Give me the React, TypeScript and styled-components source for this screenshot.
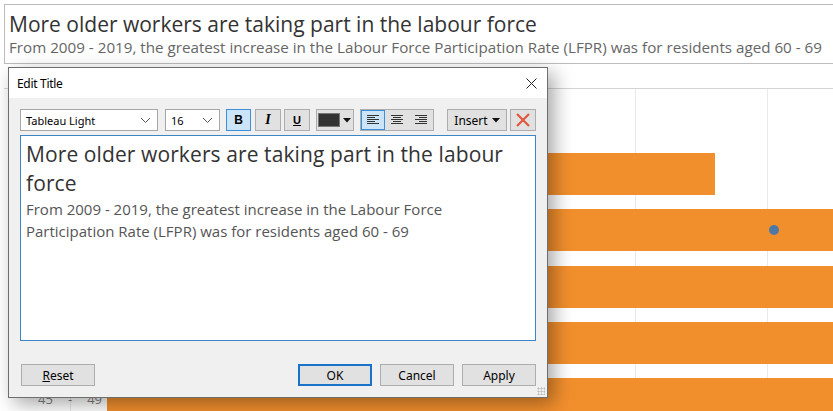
import styled, { createGlobalStyle } from "styled-components";

const GlobalStyle = createGlobalStyle`
  html, body {
    margin: 0;
    padding: 0;
    background: #ffffff;
  }
  body {
    font-family: "Open Sans", "Noto Sans", sans-serif;
    overflow: hidden;
  }
`;

type RowType = {
  label: string;
  value: number;
  dot?: number;
};

const rows: RowType[] = [
  { label: "70 - 74", value: 120 },
  { label: "65 - 69", value: 608 },
  { label: "60 - 64", value: 760, dot: 667 },
  { label: "55 - 59", value: 760 },
  { label: "50 - 54", value: 760 },
  { label: "45 - 49", value: 760 },
];

const Page = styled.div`
  position: relative;
  width: 833px;
  height: 411px;
  overflow: hidden;
  background: #fff;
`;

const Header = styled.div`
  margin: 4px 0 0 4px;
  height: 60px;
  border: 1px solid #bdbdbd;
  border-right: none;
  padding: 5px 0 0 4px;
  box-sizing: border-box;
`;

const HeaderTitle = styled.div`
  font-family: "Open Sans", sans-serif;
  font-size: 21px;
  line-height: 28px;
  color: #333;
`;

const HeaderSub = styled.div`
  font-family: "Open Sans", sans-serif;
  font-size: 15.2px;
  line-height: 18px;
  color: #666;
`;

const Chart = styled.div`
  margin: 24px 0 0 4px;
  border-top: 1px solid #d4d4d4;
  padding-top: 8px;
  display: flex;
  flex-direction: column;
  gap: 14.2px;
  background-image: repeating-linear-gradient(
    to right,
    #e9e9e9 0,
    #e9e9e9 1px,
    transparent 1px,
    transparent 132px
  );
  background-position: 103px 0;
  background-repeat: repeat-x;
  height: 400px;
`;

const Row = styled.div`
  display: flex;
  align-items: center;
  height: 42px;
`;

const Label = styled.div`
  width: 103px;
  flex-shrink: 0;
  display: flex;
  justify-content: space-between;
  padding: 0 5px 0 34px;
  box-sizing: border-box;
  font-family: "Open Sans", sans-serif;
  font-size: 13px;
  color: #808080;
`;

const BarTrack = styled.div`
  position: relative;
  flex: 1;
  height: 100%;
`;

const Bar = styled.div`
  height: 100%;
  background: #f28f2d;
`;

const Dot = styled.div`
  position: absolute;
  top: 50%;
  width: 10px;
  height: 10px;
  margin: -5px 0 0 -5px;
  border-radius: 50%;
  background: #4e79a7;
`;

const Dialog = styled.div`
  position: absolute;
  left: 8px;
  top: 67px;
  width: 540px;
  height: 331px;
  box-sizing: border-box;
  border: 1px solid #6e6e6e;
  background: #f0f0f0;
  box-shadow: 6px 6px 18px rgba(0, 0, 0, 0.35);
  display: flex;
  flex-direction: column;
  font-family: "Noto Sans", "Open Sans", sans-serif;
`;

const TitleBar = styled.div`
  height: 30px;
  background: #fff;
  display: flex;
  align-items: center;
  justify-content: space-between;
  padding: 0 9px 0 8px;
  font-size: 12px;
  color: #000;
  letter-spacing: -0.3px;
`;

const CloseBtn = styled.span`
  display: flex;
  width: 14px;
  height: 14px;
  align-items: center;
  justify-content: center;
`;

const Body = styled.div`
  flex: 1;
  display: flex;
  flex-direction: column;
  padding: 11px;
`;

const Toolbar = styled.div`
  display: flex;
  align-items: center;
  height: 22px;
`;

const Select = styled.div<{ $w: number; $mr: number }>`
  width: ${(p) => p.$w}px;
  height: 22px;
  margin-right: ${(p) => p.$mr}px;
  box-sizing: border-box;
  border: 1px solid #a6a6a6;
  background: #fff;
  display: flex;
  align-items: center;
  justify-content: space-between;
  padding: 0 6px 0 5px;
  font-size: 11px;
  color: #000;
`;

const ToolBtn = styled.div<{ $w: number; $mr: number; $on?: boolean }>`
  width: ${(p) => p.$w}px;
  height: 22px;
  margin-right: ${(p) => p.$mr}px;
  box-sizing: border-box;
  border: 1px solid ${(p) => (p.$on ? "#3c8fd8" : "#adadad")};
  background: ${(p) => (p.$on ? "#cce4f7" : "#e1e1e1")};
  display: flex;
  align-items: center;
  justify-content: center;
  font-size: 12px;
  color: #000;
`;

const Group = styled.div`
  display: flex;
  border: 1px solid #adadad;
  background: #e1e1e1;
  height: 22px;
  box-sizing: border-box;
  margin-right: 13px;
`;

const GroupBtn = styled.div<{ $on?: boolean }>`
  width: 24px;
  height: 20px;
  box-sizing: border-box;
  border: 1px solid ${(p) => (p.$on ? "#3c8fd8" : "transparent")};
  background: ${(p) => (p.$on ? "#cce4f7" : "transparent")};
  display: flex;
  align-items: center;
  justify-content: center;
`;

const Swatch = styled.span`
  width: 22px;
  height: 14px;
  background: #333;
  border: 1px solid #777;
  box-sizing: border-box;
`;

const Editor = styled.div`
  margin-top: 4px;
  height: 206px;
  box-sizing: border-box;
  border: 1px solid #3d86c6;
  background: #fff;
  padding: 4px 5px;
  font-family: "Open Sans", sans-serif;
`;

const EditTitle = styled.div`
  font-size: 21px;
  line-height: 29px;
  letter-spacing: 0.1px;
  color: #333;
`;

const EditSub = styled.div`
  font-size: 15px;
  line-height: 22px;
  color: #555;
`;

const Footer = styled.div`
  margin-top: 23px;
  display: flex;
  align-items: center;
  gap: 8px;
  padding-left: 1px;
`;

const DlgButton = styled.div<{ $primary?: boolean }>`
  width: 74px;
  height: 22px;
  box-sizing: border-box;
  border: ${(p) => (p.$primary ? "2px solid #1a73c8" : "1px solid #adadad")};
  background: #e1e1e1;
  display: flex;
  align-items: center;
  justify-content: center;
  font-size: 12px;
  color: #000;
`;

const Spacer = styled.div`
  flex: 1;
`;

const Grip = styled.div`
  position: absolute;
  right: 2px;
  bottom: 2px;
  width: 8px;
  height: 8px;
  background-image: radial-gradient(#b8b8b8 45%, transparent 50%);
  background-size: 3px 3px;
`;

function Chevron() {
  return (
    <svg width="11" height="7" viewBox="0 0 11 7">
      <path d="M1 1 L5.5 5.5 L10 1" fill="none" stroke="#555" strokeWidth="1" />
    </svg>
  );
}

function AlignIcon({ mode }: { mode: "left" | "center" | "right" }) {
  const lens = [12, 8, 12, 8, 12];
  return (
    <svg width="12" height="10" viewBox="0 0 12 10">
      {lens.map((len, i) => {
        const x1 = mode === "left" ? 0 : mode === "right" ? 12 - len : (12 - len) / 2;
        return (
          <line
            key={i}
            x1={x1}
            x2={x1 + len}
            y1={i * 2 + 0.5}
            y2={i * 2 + 0.5}
            stroke="#333"
            strokeWidth="1"
          />
        );
      })}
    </svg>
  );
}

export default function App() {
  return (
    <Page>
      <GlobalStyle />
      <Header>
        <HeaderTitle>More older workers are taking part in the labour force</HeaderTitle>
        <HeaderSub>
          From 2009 - 2019, the greatest increase in the Labour Force Participation Rate (LFPR) was for
          residents aged 60 - 69
        </HeaderSub>
      </Header>

      <Chart>
        {rows.map((r) => {
          const [a, b] = r.label.split(" - ");
          return (
            <Row key={r.label}>
              <Label>
                <span>{a}</span>
                <span>-</span>
                <span>{b}</span>
              </Label>
              <BarTrack>
                <Bar style={{ width: r.value }} />
                {r.dot !== undefined && <Dot style={{ left: r.dot }} />}
              </BarTrack>
            </Row>
          );
        })}
      </Chart>

      <Dialog>
        <TitleBar>
          <span>Edit Title</span>
          <CloseBtn>
            <svg width="11" height="11" viewBox="0 0 11 11">
              <path d="M0.5 0.5 L10.5 10.5 M10.5 0.5 L0.5 10.5" stroke="#222" strokeWidth="1" />
            </svg>
          </CloseBtn>
        </TitleBar>
        <Body>
          <Toolbar>
            <Select $w={138} $mr={7}>
              <span>Tableau Light</span>
              <Chevron />
            </Select>
            <Select $w={55} $mr={6}>
              <span>16</span>
              <Chevron />
            </Select>
            <ToolBtn $w={25} $mr={4} $on>
              <b style={{ fontFamily: "Liberation Sans, sans-serif", fontSize: 12 }}>B</b>
            </ToolBtn>
            <ToolBtn $w={26} $mr={3}>
              <i style={{ fontFamily: "Liberation Serif, serif", fontSize: 14, fontWeight: 700 }}>I</i>
            </ToolBtn>
            <ToolBtn $w={26} $mr={6}>
              <span
                style={{
                  fontFamily: "Liberation Sans, sans-serif",
                  fontWeight: 700,
                  fontSize: 11,
                  textDecoration: "underline",
                }}
              >
                U
              </span>
            </ToolBtn>
            <ToolBtn $w={38} $mr={6}>
              <Swatch />
              <svg width="9" height="5" viewBox="0 0 9 5" style={{ marginLeft: 3 }}>
                <path d="M0 0 H8 L4 4.5 Z" fill="#111" />
              </svg>
            </ToolBtn>
            <Group>
              <GroupBtn $on>
                <AlignIcon mode="left" />
              </GroupBtn>
              <GroupBtn>
                <AlignIcon mode="center" />
              </GroupBtn>
              <GroupBtn>
                <AlignIcon mode="right" />
              </GroupBtn>
            </Group>
            <ToolBtn $w={60} $mr={3}>
              <span>Insert</span>
              <svg width="8" height="5" viewBox="0 0 8 5" style={{ marginLeft: 4 }}>
                <path d="M0 0 H8 L4 4.5 Z" fill="#111" />
              </svg>
            </ToolBtn>
            <ToolBtn $w={26} $mr={0}>
              <svg width="14" height="14" viewBox="0 0 14 14">
                <path d="M1 1 L13 13 M13 1 L1 13" stroke="#e2583e" strokeWidth="2.2" />
              </svg>
            </ToolBtn>
          </Toolbar>

          <Editor>
            <EditTitle>More older workers are taking part in the labour force</EditTitle>
            <EditSub>
              From 2009 - 2019, the greatest increase in the Labour Force Participation Rate (LFPR) was
              for residents aged 60 - 69
            </EditSub>
          </Editor>

          <Footer>
            <DlgButton>
              <span>
                <u>R</u>eset
              </span>
            </DlgButton>
            <Spacer />
            <DlgButton $primary>OK</DlgButton>
            <DlgButton>Cancel</DlgButton>
            <DlgButton>Apply</DlgButton>
          </Footer>
        </Body>
        <Grip />
      </Dialog>
    </Page>
  );
}
